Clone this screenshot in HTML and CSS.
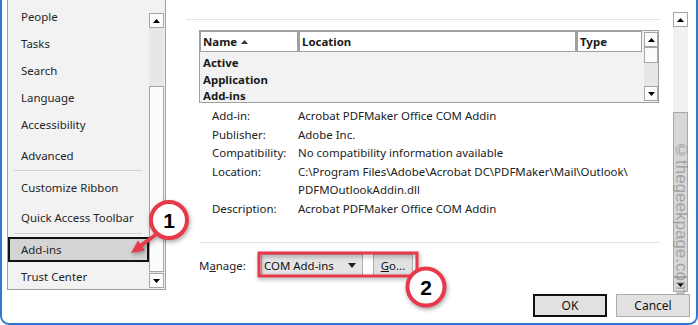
FILE: index.html
```html
<!DOCTYPE html>
<html>
<head>
<meta charset="utf-8">
<link rel="stylesheet" href="styles.css">
</head>
<body>
<div class="window">
  <div class="body">
    <div class="nav">
      <ul class="nav-list">
        <li class="nav-item">People</li>
        <li class="nav-item">Tasks</li>
        <li class="nav-item">Search</li>
        <li class="nav-item">Language</li>
        <li class="nav-item">Accessibility</li>
        <li class="nav-item advanced">Advanced</li>
        <li class="nav-sep sep-a"></li>
        <li class="nav-item after-sep">Customize Ribbon</li>
        <li class="nav-item after-sep">Quick Access Toolbar</li>
        <li class="nav-sep sep-b"></li>
        <li class="nav-item selected">Add-ins</li>
        <li class="nav-item trust">Trust Center</li>
      </ul>
      <div class="vscroll nav-scroll">
        <div class="sb-btn"><svg width="7" height="4" viewBox="0 0 7 4"><polygon points="0,4 7,4 3.5,0" fill="#000"/></svg></div>
        <div class="sb-track"><div class="sb-thumb nav-thumb"></div></div>
        <div class="sb-btn"><svg width="7" height="4" viewBox="0 0 7 4"><polygon points="0,0 7,0 3.5,4" fill="#000"/></svg></div>
      </div>
    </div>

    <div class="main">
      <div class="content">
        <div class="sep top-sep"></div>
        <div class="table">
          <div class="tbl-main">
            <div class="thead">
              <div class="th th-name">Name <svg class="sort" width="7" height="4" viewBox="0 0 7 4"><polygon points="0,4 7,4 3.5,0" fill="#333"/></svg></div>
              <div class="th th-loc">Location</div>
              <div class="th th-type">Type</div>
            </div>
            <div class="tbody">
              <div class="trow">Active</div>
              <div class="trow">Application</div>
              <div class="trow">Add-ins</div>
            </div>
          </div>
          <div class="vscroll tbl-scroll">
            <div class="sb-btn"><svg width="7" height="4" viewBox="0 0 7 4"><polygon points="0,4 7,4 3.5,0" fill="#000"/></svg></div>
            <div class="sb-thumb tbl-thumb"></div>
            <div class="sb-track"></div>
            <div class="sb-btn"><svg width="7" height="4" viewBox="0 0 7 4"><polygon points="0,0 7,0 3.5,4" fill="#000"/></svg></div>
          </div>
        </div>

        <dl class="details">
          <dt>Add-in:</dt><dd>Acrobat PDFMaker Office COM Addin</dd>
          <dt>Publisher:</dt><dd>Adobe Inc.</dd>
          <dt>Compatibility:</dt><dd>No compatibility information available</dd>
          <dt>Location:</dt><dd>C:\Program Files\Adobe\Acrobat DC\PDFMaker\Mail\Outlook\<br>PDFMOutlookAddin.dll</dd>
          <dt>Description:</dt><dd>Acrobat PDFMaker Office COM Addin</dd>
        </dl>

        <div class="sep bottom-sep"></div>

        <div class="manage">
          <span class="manage-label">M<u>a</u>nage:</span>
          <div class="combo">
            <span>COM Add-ins</span>
            <svg width="8" height="5" viewBox="0 0 8 5"><polygon points="0,0 8,0 4,5" fill="#222"/></svg>
          </div>
          <button class="btn go"><u>G</u>o...</button>
        </div>
      </div>

      <div class="vscroll pane-scroll">
        <div class="sb-btn"><svg width="7" height="4" viewBox="0 0 7 4"><polygon points="0,4 7,4 3.5,0" fill="#000"/></svg></div>
        <div class="sb-track pane-track"><div class="sb-thumb pane-thumb"></div></div>
        <div class="sb-btn pane-down"><svg width="7" height="4" viewBox="0 0 7 4"><polygon points="0,0 7,0 3.5,4" fill="#000"/></svg></div>
      </div>
    </div>
  </div>

  <div class="footer">
    <button class="btn dlg default">OK</button>
    <button class="btn dlg">Cancel</button>
  </div>

  <div class="watermark">©thegeekpage.com</div>

  <svg class="annot" width="698" height="325" viewBox="0 0 698 325">
    <g class="shadow">
      <rect x="259" y="253" width="158" height="23" fill="none" stroke="#e8394b" stroke-width="3"/>
      <line x1="158" y1="233" x2="141" y2="245.5" stroke="#e8394b" stroke-width="4"/>
      <polygon points="131,253 145,250.4 138,240.6" fill="#e8394b"/>
      <circle cx="169" cy="220" r="18" fill="#fff" stroke="#e8394b" stroke-width="4"/>
      <circle cx="426" cy="287" r="18.5" fill="#fff" stroke="#e8394b" stroke-width="4"/>
    </g>
    <text x="169" y="227.5" class="num" text-anchor="middle">1</text>
    <text x="426" y="294.5" class="num" text-anchor="middle">2</text>
  </svg>
</div>
</body>
</html>
```

FILE: styles.css
```css
html, body {
  margin: 0;
  padding: 0;
  background: #ffffff;
}

body {
  font-family: "Segoe UI", "Noto Sans", sans-serif;
  font-size: 11.45px;
  color: #1e1e1e;
}

.window {
  position: relative;
  width: 698px;
  height: 325px;
  box-sizing: border-box;
  border: 2px solid #2b7bd3;
  border-top: none;
  border-radius: 0 0 9px 9px;
  background: #fff;
  display: flex;
  flex-direction: column;
  overflow: hidden;
}

.body {
  display: flex;
  height: 292px;
  flex: none;
}

/* ---------- left navigation ---------- */
.nav {
  margin-left: 5px;
  width: 159px;
  height: 290px;
  box-sizing: border-box;
  border: 1px solid #a0a0a0;
  border-top: none;
  background: #f2f2f2;
  display: flex;
  flex: none;
}

.nav-list {
  list-style: none;
  margin: 0;
  padding: 3px 0 0;
  width: 141px;
  flex: none;
  overflow: hidden;
}

.nav-item {
  height: 27px;
  line-height: 27px;
  padding-left: 13px;
  color: #262626;
  white-space: nowrap;
}

.nav-item.advanced { margin-top: 4px; }
.nav-item.after-sep { margin-top: 3px; }

.nav-sep {
  height: 1px;
  background: #d2d2d2;
  margin: 0 7px 0 6px;
}
.sep-a { margin-top: 1px; }
.sep-b { margin-top: 2px; }

.nav-item.selected {
  margin-top: 3px;
  height: 25px;
  line-height: 21px;
  box-sizing: border-box;
  border: 2px solid #111;
  background: #d4d4d4;
  padding-left: 11px;
}

.nav-item.trust { margin-top: 1px; }

/* ---------- scrollbars ---------- */
.vscroll {
  display: flex;
  flex-direction: column;
  flex: none;
  box-sizing: border-box;
}

.sb-btn {
  height: 15px;
  flex: none;
  box-sizing: border-box;
  border: 1px solid #a6a6a6;
  background: #fcfcfc;
  display: flex;
  align-items: center;
  justify-content: center;
}

.sb-track {
  flex: 1;
  background: #e7e7e7;
}

.sb-thumb {
  box-sizing: border-box;
  border: 1px solid #a6a6a6;
  background: #fcfcfc;
}

.nav-scroll {
  width: 16px;
  padding: 13px 1px 1px 0;
}

.nav-thumb {
  margin-top: 58px;
  height: 186px;
}

/* ---------- main pane ---------- */
.main {
  display: flex;
  flex: none;
}

.content {
  width: 474px;
  margin-left: 20px;
  padding-top: 19px;
  flex: none;
}

.sep {
  height: 1px;
  background: #e3e3e3;
}

.top-sep { width: 474px; }

.table {
  margin: 10px 0 0 13px;
  width: 460px;
  height: 73px;
  box-sizing: border-box;
  border: 1px solid #a0a0a0;
  background: #f2f2f2;
  display: flex;
}

.tbl-main {
  flex: 1;
  display: flex;
  flex-direction: column;
}

.thead {
  display: flex;
  height: 21px;
  flex: none;
}

.th {
  box-sizing: border-box;
  border: 1px solid #a0a0a0;
  background: #fff;
  font-weight: 700;
  color: #1a1a1a;
  padding-left: 2px;
  line-height: 19px;
  white-space: nowrap;
}
.th + .th { border-left: none; }
.th-name { width: 98px; }
.th-loc { width: 278px; border-left: 2px solid #a0a0a0 !important; }
.th-type { width: 66px; border-left: 2px solid #a0a0a0 !important; }

.sort {
  margin-left: 1px;
  vertical-align: 2px;
}

.tbody {
  padding: 3px 0 0 3px;
  overflow: hidden;
  flex: 1;
}

.trow {
  line-height: 16.5px;
  font-weight: 700;
  color: #1a1a1a;
}

.tbl-scroll {
  width: 17px;
  padding: 1px 1px 1px 2px;
}

.tbl-thumb {
  height: 16px;
  flex: none;
}

/* ---------- details ---------- */
.details {
  margin: 4px 0 0 26px;
  display: grid;
  grid-template-columns: 86px auto;
  line-height: 18.5px;
}

.details dt, .details dd {
  margin: 0;
  white-space: nowrap;
  color: #222;
}

.bottom-sep {
  margin: 24px 0 0 13px;
  width: 461px;
}

/* ---------- manage row ---------- */
.manage {
  margin: 11px 0 0 13px;
  height: 22px;
  display: flex;
  align-items: center;
}

.manage-label {
  width: 62px;
  color: #222;
}

.combo {
  width: 102px;
  height: 22px;
  box-sizing: border-box;
  border: 1px solid #adadad;
  background: #e5e5e5;
  display: flex;
  align-items: center;
  justify-content: space-between;
  padding: 0 6px 0 2px;
  color: #111;
}

.btn {
  font-family: inherit;
  font-size: 11.45px;
  color: #111;
  background: #e1e1e1;
  border: 1px solid #adadad;
  box-sizing: border-box;
  padding: 0;
  margin: 0;
}

.go {
  margin-left: 10px;
  width: 40px;
  height: 22px;
}

/* ---------- right pane scroll ---------- */
.pane-scroll {
  width: 16px;
  margin-left: 13px;
  height: 292px;
  padding: 12px 1px 0 0;
}

.pane-track {
  background: #f0f0f0;
}

.pane-thumb {
  margin-top: 85px;
  height: 165px;
  background: #d7d7d7;
  border-color: #a8a8a8;
}

.pane-down {
  background: #d7d7d7;
}

/* ---------- footer ---------- */
.footer {
  display: flex;
  justify-content: flex-end;
  gap: 9px;
  padding: 2px 6px 0 0;
}

.dlg {
  width: 74px;
  height: 23px;
  font-size: 12px;
}

.dlg.default {
  border: 2px solid #111;
}

/* ---------- overlays ---------- */
.watermark {
  position: absolute;
  left: 670px;
  top: 141px;
  writing-mode: vertical-rl;
  font-family: "Liberation Sans", sans-serif;
  font-size: 17px;
  color: rgba(140, 140, 140, 0.7);
  line-height: 18px;
}

.annot {
  position: absolute;
  left: -2px;
  top: 0;
  pointer-events: none;
}

.shadow {
  filter: drop-shadow(1px 2px 2px rgba(0, 0, 0, 0.35));
}

.num {
  font-family: "Liberation Sans", sans-serif;
  font-weight: 700;
  font-size: 21px;
  fill: #000;
}
```
